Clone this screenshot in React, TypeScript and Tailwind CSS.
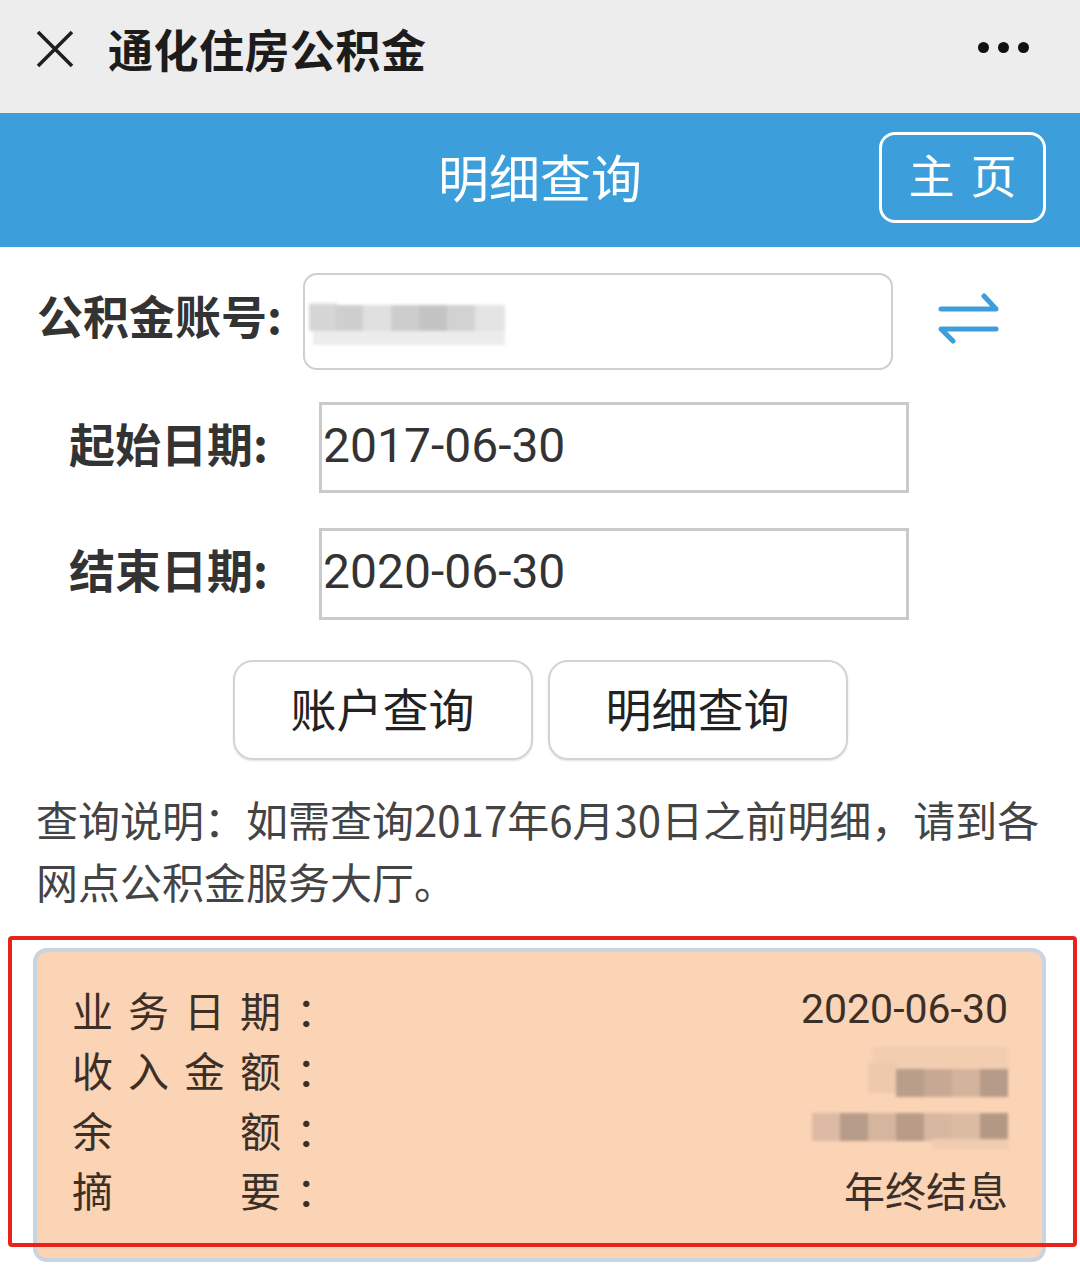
import React from "react";

const Cell = ({ c }: { c: string }) => (
  <span className="w-[56px] inline-block">{c}</span>
);

function BlurBlocks({ blocks }: { blocks: { x: number; y: number; w: number; h: number; c: string }[] }) {
  return (
    <>
      {blocks.map((b, i) => (
        <div
          key={i}
          className="absolute"
          style={{ left: b.x, top: b.y, width: b.w, height: b.h, background: b.c }}
        />
      ))}
    </>
  );
}

export default function App() {
  const labelRow = (cells: string[], value: React.ReactNode, key: string) => (
    <div key={key} className="flex items-center justify-between h-[60px]">
      <div className="flex">
        {cells.map((c, i) => (
          <Cell key={i} c={c} />
        ))}
      </div>
      <div className="flex items-center">{value}</div>
    </div>
  );

  return (
    <div className="relative w-[1080px] h-[1283px] bg-white overflow-hidden font-['Noto_Sans_CJK_SC',sans-serif]">
      {/* top bar */}
      <div className="h-[113px] bg-[#ededed] flex items-center">
        <svg className="ml-[35px] mt-[-16px]" width="40" height="40" viewBox="0 0 40 40">
          <path d="M3 3 L37 37 M37 3 L3 37" stroke="#1f1f1f" strokeWidth="3.6" strokeLinecap="butt" />
        </svg>
        <div className="ml-[33px] mt-[-16px] text-[45px] font-bold text-[#1c1c1c] leading-none tracking-[0.5px]">
          通化住房公积金
        </div>
        <div className="ml-auto mr-[51px] mt-[-18px] flex gap-[9px]">
          <span className="w-[11px] h-[11px] rounded-full bg-[#111]" />
          <span className="w-[11px] h-[11px] rounded-full bg-[#111]" />
          <span className="w-[11px] h-[11px] rounded-full bg-[#111]" />
        </div>
      </div>

      {/* blue header */}
      <div className="relative h-[134px] bg-[#3c9edb] flex items-center justify-center">
        <div className="text-[51px] text-white leading-none mt-[-8px]">明细查询</div>
        <div className="absolute right-[34px] top-[19px] w-[167px] h-[91px] border-[3px] border-white rounded-[16px] flex items-center justify-center">
          <span className="text-[46px] text-white leading-none tracking-[16px] ml-[16px] mt-[-10px]">主页</span>
        </div>
      </div>

      {/* form */}
      <div className="pt-[26px]">
        <div className="flex items-center h-[97px]">
          <div className="ml-[37px] w-[266px] text-[46px] font-bold text-[#333] leading-none mt-[-16px]">公积金账号:</div>
          <div className="relative w-[590px] h-[97px] border-2 border-[#cfcfcf] rounded-[14px] overflow-hidden">
            <div className="absolute inset-0 blur-[1.5px]">
              <BlurBlocks
                blocks={[
                  { x: 4, y: 28, w: 28, h: 28, c: "#e2e2e2" },
                  { x: 4, y: 30, w: 196, h: 26, c: "#d6d6d6" },
                  { x: 30, y: 30, w: 28, h: 26, c: "#cfcfcf" },
                  { x: 58, y: 30, w: 28, h: 26, c: "#e0e0e0" },
                  { x: 86, y: 30, w: 28, h: 26, c: "#cdcdcd" },
                  { x: 114, y: 30, w: 28, h: 26, c: "#c4c4c4" },
                  { x: 142, y: 30, w: 28, h: 26, c: "#d2d2d2" },
                  { x: 170, y: 30, w: 30, h: 26, c: "#e4e4e4" },
                  { x: 8, y: 56, w: 192, h: 14, c: "#ececec" },
                ]}
              />
            </div>
          </div>
          <svg className="ml-[45px] mt-[-8px]" width="62" height="52" viewBox="0 0 62 52">
            <path
              d="M3 17 L58 17 L46 4 M58 37 L3 37 L15 49"
              fill="none"
              stroke="#3c9edb"
              strokeWidth="5"
              strokeLinecap="round"
              strokeLinejoin="round"
            />
          </svg>
        </div>

        <div className="flex items-center h-[91px] mt-[32px]">
          <div className="ml-[69px] w-[250px] text-[46px] font-bold text-[#333] leading-none mt-[-12px]">起始日期:</div>
          <div className="w-[590px] h-[91px] border-[3px] border-[#cacaca] flex items-center">
            <span className="ml-[1px] mt-[-4px] text-[48px] text-[#333] leading-none font-['Roboto',sans-serif]">2017-06-30</span>
          </div>
        </div>

        <div className="flex items-center h-[92px] mt-[35px]">
          <div className="ml-[69px] w-[250px] text-[46px] font-bold text-[#333] leading-none mt-[-12px]">结束日期:</div>
          <div className="w-[590px] h-[92px] border-[3px] border-[#cacaca] flex items-center">
            <span className="ml-[1px] mt-[-4px] text-[48px] text-[#333] leading-none font-['Roboto',sans-serif]">2020-06-30</span>
          </div>
        </div>

        <div className="flex justify-center gap-[15px] mt-[40px]">
          <div className="w-[300px] h-[100px] rounded-[20px] border-2 border-[#d3d3d3] shadow-[0_1px_2px_rgba(0,0,0,0.12)] flex items-center justify-center text-[46px] text-[#222] leading-none pb-[6px]">
            账户查询
          </div>
          <div className="w-[300px] h-[100px] rounded-[20px] border-2 border-[#d3d3d3] shadow-[0_1px_2px_rgba(0,0,0,0.12)] flex items-center justify-center text-[46px] text-[#222] leading-none pb-[6px]">
            明细查询
          </div>
        </div>

        <div className="mt-[28px] pl-[36px] text-[42px] leading-[62px] text-[#444]">
          <div className="whitespace-nowrap">查询说明：如需查询2017年6月30日之前明细，请到各</div>
          <div className="whitespace-nowrap">网点公积金服务大厅。</div>
        </div>

        {/* card */}
        <div className="mt-[36px] ml-[33px] w-[1013px] h-[314px] border-[4px] border-[#c8d4e1] rounded-[14px] bg-[#fbd3b5] pt-[27px] pl-[35px] pr-[34px] text-[41px] text-[#3b2f28] leading-none">
          {labelRow(["业", "务", "日", "期", "："], <span className="font-['Roboto',sans-serif] text-[41px]">2020-06-30</span>, "a")}
          {labelRow(
            ["收", "入", "金", "额", "："],
            <div className="relative w-[140px] h-[56px] blur-[1.5px]">
              <BlurBlocks
                blocks={[
                  { x: 4, y: 6, w: 136, h: 40, c: "#f3cdb0" },
                  { x: 0, y: 22, w: 30, h: 30, c: "#efc9ac" },
                  { x: 28, y: 28, w: 28, h: 28, c: "#b99e8b" },
                  { x: 56, y: 28, w: 28, h: 28, c: "#c7a893" },
                  { x: 84, y: 28, w: 28, h: 28, c: "#d4b39c" },
                  { x: 112, y: 28, w: 28, h: 28, c: "#b69b88" },
                ]}
              />
            </div>,
            "b"
          )}
          {labelRow(
            ["余", "", "", "额", "："],
            <div className="relative w-[196px] h-[40px] blur-[1.5px]">
              <BlurBlocks
                blocks={[
                  { x: 0, y: 4, w: 28, h: 28, c: "#dcbaa3" },
                  { x: 28, y: 4, w: 28, h: 28, c: "#b79c89" },
                  { x: 56, y: 4, w: 28, h: 28, c: "#d6b59e" },
                  { x: 84, y: 4, w: 28, h: 28, c: "#b89c88" },
                  { x: 112, y: 4, w: 28, h: 28, c: "#d8b7a0" },
                  { x: 140, y: 4, w: 28, h: 28, c: "#dcbba3" },
                  { x: 168, y: 4, w: 28, h: 28, c: "#b29885" },
                  { x: 120, y: 30, w: 76, h: 10, c: "#f0cbb0" },
                ]}
              />
            </div>,
            "c"
          )}
          {labelRow(["摘", "", "", "要", "："], <span>年终结息</span>, "d")}
        </div>
      </div>

      {/* red annotation box */}
      <div className="absolute left-[8px] top-[936px] w-[1069px] h-[311px] border-[4px] border-[#e8231a] rounded-[4px]" />
    </div>
  );
}
